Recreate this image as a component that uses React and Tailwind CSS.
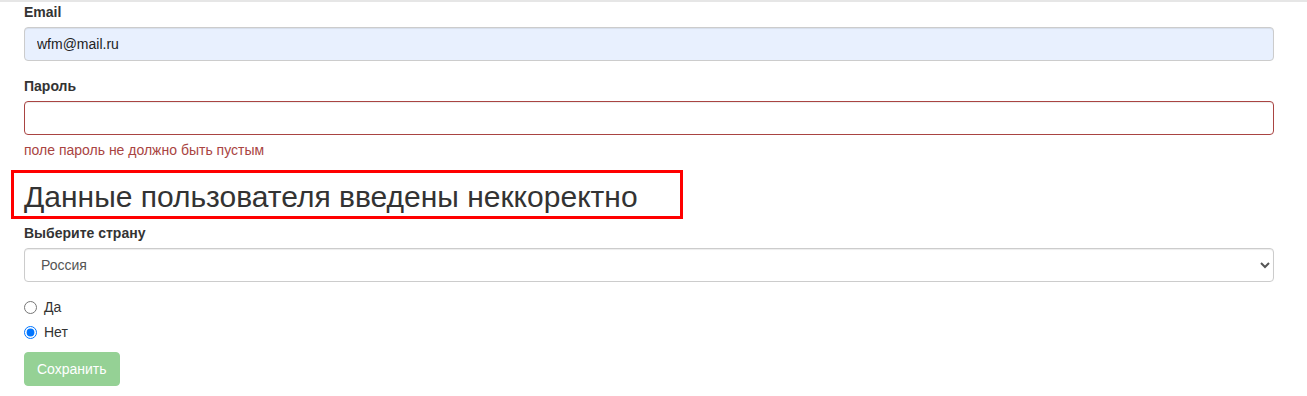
import { useState } from "react";

const inputBase =
  "block w-full h-[34px] px-[12px] py-[6px] text-[14px] rounded-[4px] border shadow-[inset_0_1px_1px_rgba(0,0,0,0.075)] outline-none";

export default function App() {
  const [email, setEmail] = useState("wfm@mail.ru");
  const [password, setPassword] = useState("");
  const [country, setCountry] = useState("russia");
  const [answer, setAnswer] = useState("no");

  return (
    <div
      className="min-h-screen bg-white text-[#333] text-[14px] leading-[20px] border-t-2 border-[#e6e6e6]"
      style={{ fontFamily: '"Liberation Sans", Arial, sans-serif' }}
    >
      <form className="pl-[24px] pr-[33px]" onSubmit={(e) => e.preventDefault()}>
        {/* Email */}
        <div className="mb-[15px]">
          <label className="block font-bold mb-[5px]">Email</label>
          <input
            type="text"
            value={email}
            onChange={(e) => setEmail(e.target.value)}
            className={`${inputBase} border-[#ccc] bg-[#e8f0fe] text-[#222]`}
          />
        </div>

        {/* Password */}
        <div>
          <label className="block font-bold mb-[5px]">Пароль</label>
          <input
            type="password"
            value={password}
            onChange={(e) => setPassword(e.target.value)}
            className={`${inputBase} border-[#a94442] bg-white text-[#555]`}
          />
          <p className="mt-[5px] text-[#a94442]">поле пароль не должно быть пустым</p>
        </div>

        {/* Error block */}
        <div className="mt-[10px] -ml-[13px] w-[672px] border-[3px] border-[#ff0000] pt-[7px] pb-[3px] pl-[10px]">
          <h2 className="text-[30px] leading-[33px] font-normal text-[#333]">
            Данные пользователя введены неккоректно
          </h2>
        </div>

        {/* Country */}
        <div className="mt-[4px] mb-[15px]">
          <label className="block font-bold mb-[5px]">Выберите страну</label>
          <select
            value={country}
            onChange={(e) => setCountry(e.target.value)}
            className={`${inputBase} border-[#ccc] bg-white text-[#555]`}
          >
            <option value="russia">Россия</option>
            <option value="belarus">Беларусь</option>
            <option value="kazakhstan">Казахстан</option>
          </select>
        </div>

        {/* Radios */}
        <div className="flex flex-col gap-[5px]">
          <label className="flex items-center h-[20px] cursor-pointer">
            <input
              type="radio"
              name="answer"
              checked={answer === "yes"}
              onChange={() => setAnswer("yes")}
              className="m-0 w-[13px] h-[13px] mr-[7px]"
            />
            Да
          </label>
          <label className="flex items-center h-[20px] cursor-pointer">
            <input
              type="radio"
              name="answer"
              checked={answer === "no"}
              onChange={() => setAnswer("no")}
              className="m-0 w-[13px] h-[13px] mr-[7px]"
            />
            Нет
          </label>
        </div>

        <button
          type="submit"
          disabled
          className="mt-[10px] h-[34px] px-[12px] rounded-[4px] bg-[#95d195] border border-[#95d195] text-white text-[14px] cursor-not-allowed"
        >
          Сохранить
        </button>
      </form>
    </div>
  );
}
